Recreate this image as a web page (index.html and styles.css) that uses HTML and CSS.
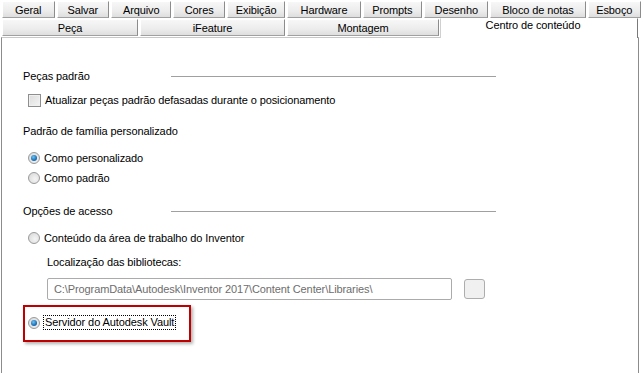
FILE: index.html
```html
<!DOCTYPE html>
<html lang="pt">
<head>
  <meta charset="UTF-8">
  <title>Opções da aplicação</title>
  <link rel="stylesheet" href="styles.css">
</head>
<body>
  <div class="tabs">
    <div class="tab-row">
      <div class="tab w-geral">Geral</div>
      <div class="tab w-salvar">Salvar</div>
      <div class="tab w-arquivo">Arquivo</div>
      <div class="tab w-cores">Cores</div>
      <div class="tab w-exib">Exibição</div>
      <div class="tab w-hard">Hardware</div>
      <div class="tab w-prompts">Prompts</div>
      <div class="tab w-desenho">Desenho</div>
      <div class="tab w-bloco">Bloco de notas</div>
      <div class="tab w-esboco">Esboço</div>
    </div>
    <div class="tab-row">
      <div class="tab w-peca">Peça</div>
      <div class="tab w-ifeat">iFeature</div>
      <div class="tab w-mont">Montagem</div>
      <div class="tab tab-active">Centro de conteúdo</div>
    </div>
  </div>

  <div class="panel">
    <div class="group-title"><span>Peças padrão</span><span class="rule"></span></div>
    <div class="option"><span class="check"></span>Atualizar peças padrão defasadas durante o posicionamento</div>

    <div class="group-title plain"><span>Padrão de família personalizado</span></div>
    <div class="option first"><span class="radio on"></span>Como personalizado</div>
    <div class="option"><span class="radio"></span>Como padrão</div>

    <div class="group-title"><span>Opções de acesso</span><span class="rule"></span></div>
    <div class="option first"><span class="radio"></span>Conteúdo da área de trabalho do Inventor</div>
    <div class="label">Localização das bibliotecas:</div>
    <div class="path-row">
      <div class="path">C:\ProgramData\Autodesk\Inventor 2017\Content Center\Libraries\</div>
      <div class="browse"></div>
    </div>
    <div class="highlight">
      <div class="option"><span class="radio on"></span><span class="focus">Servidor do Autodesk Vault</span></div>
    </div>
  </div>
</body>
</html>
```

FILE: styles.css
```css
/* Janela de opções */
body {
  margin: 0;
  width: 641px;
  height: 373px;
  overflow: hidden;
  background: #fff;
  font-family: "Liberation Sans", Arial, sans-serif;
  font-size: 11px;
  letter-spacing: -0.1px;
  color: #000;
}

.tabs {
  padding: 1px 0 0 2px;
  background: #fff;
}

.tab-row {
  display: flex;
  gap: 2px;
  height: 18px;
}

.tab {
  box-sizing: border-box;
  height: 17px;
  line-height: 16px;
  text-align: center;
  background: linear-gradient(#f7f7f7, #ececec 60%, #dedede);
  border: 1px solid #fff;
  border-right-color: #8c8c8c;
  border-bottom-color: #a0a0a0;
  white-space: nowrap;
}

.w-geral { width: 53px; }
.w-salvar { width: 53px; }
.w-arquivo { width: 61px; }
.w-cores { width: 52px; }
.w-exib { width: 59px; }
.w-hard { width: 74px; }
.w-prompts { width: 60px; }
.w-desenho { width: 65px; }
.w-bloco { width: 96px; }
.w-esboco { width: 54px; }

.w-peca { width: 136px; }
.w-ifeat { width: 145px; }
.w-mont { width: 152px; }

.tab-active {
  flex: 1;
  margin-left: -1px;
  margin-right: 3px;
  margin-top: -1px;
  height: 20px;
  line-height: 13px;
  background: #fff;
  border: 1px solid #fff;
  border-right: 1px solid #7a7a7a;
  border-left: 1px solid #d0d0d0;
  border-bottom: none;
  text-align: center;
  padding-right: 12px;
  position: relative;
  z-index: 1;
}

.panel {
  box-sizing: border-box;
  height: 336px;
  margin: 0 2px 0 1px;
  border-left: 1px solid #8c8c8c;
  border-right: 1px solid #8c8c8c;
  border-top: 1px solid #c8c8c8;
  padding: 31px 0 0 21px;
}

.group-title {
  display: flex;
  align-items: center;
  height: 14px;
}

.group-title .rule {
  width: 325px;
  height: 1px;
  background: #a0a0a0;
  margin-left: auto;
  margin-right: 142px;
}

.group-title + .option {
  margin-top: 10px;
}

.option {
  display: flex;
  align-items: center;
  height: 14px;
  padding-left: 5px;
  margin-bottom: 6px;
}

.option + .group-title {
  margin-top: 19px;
}

.option + .plain {
  margin-top: 17px;
}

.option.first {
  margin-top: 13px;
}

.check {
  box-sizing: border-box;
  width: 13px;
  height: 13px;
  margin-right: 4px;
  border: 1px solid #8e8e8e;
  background: linear-gradient(135deg, #dcdcdc, #f4f4f4);
  box-shadow: inset 0 0 0 1px #f0f0f0;
}

.radio {
  box-sizing: border-box;
  width: 12px;
  height: 12px;
  margin-right: 4px;
  border-radius: 50%;
  border: 1px solid #9a9a9a;
  background: radial-gradient(circle at 60% 60%, #f4f4f4, #d6d6d6);
  display: flex;
  align-items: center;
  justify-content: center;
}

.radio.on::after {
  content: "";
  width: 6px;
  height: 6px;
  border-radius: 50%;
  background: radial-gradient(circle at 40% 35%, #6fc4f2, #1a6fb8 60%, #0c4a86);
}

.label {
  margin: 10px 0 0 24px;
  height: 14px;
  line-height: 14px;
}

.path-row {
  display: flex;
  align-items: center;
  gap: 12px;
  margin: 9px 0 0 24px;
}

.path {
  box-sizing: border-box;
  width: 405px;
  height: 22px;
  line-height: 20px;
  padding-left: 6px;
  border: 1px solid #ababab;
  border-radius: 2px;
  color: #6d6d6d;
}

.browse {
  box-sizing: border-box;
  width: 21px;
  height: 20px;
  border: 1px solid #adadad;
  border-radius: 3px;
  background: #f0f0f0;
}

.highlight {
  box-sizing: border-box;
  width: 168px;
  height: 37px;
  margin-top: 5px;
  border: 2px solid #c00000;
  box-shadow: 2px 2px 3px rgba(0, 0, 0, 0.3);
  display: flex;
  align-items: center;
  padding-bottom: 2px;
}

.highlight .option {
  margin: 0;
  padding-left: 3px;
}

.focus {
  outline: 1px dotted #000;
  padding: 0 1px;
  line-height: 13px;
}
```
